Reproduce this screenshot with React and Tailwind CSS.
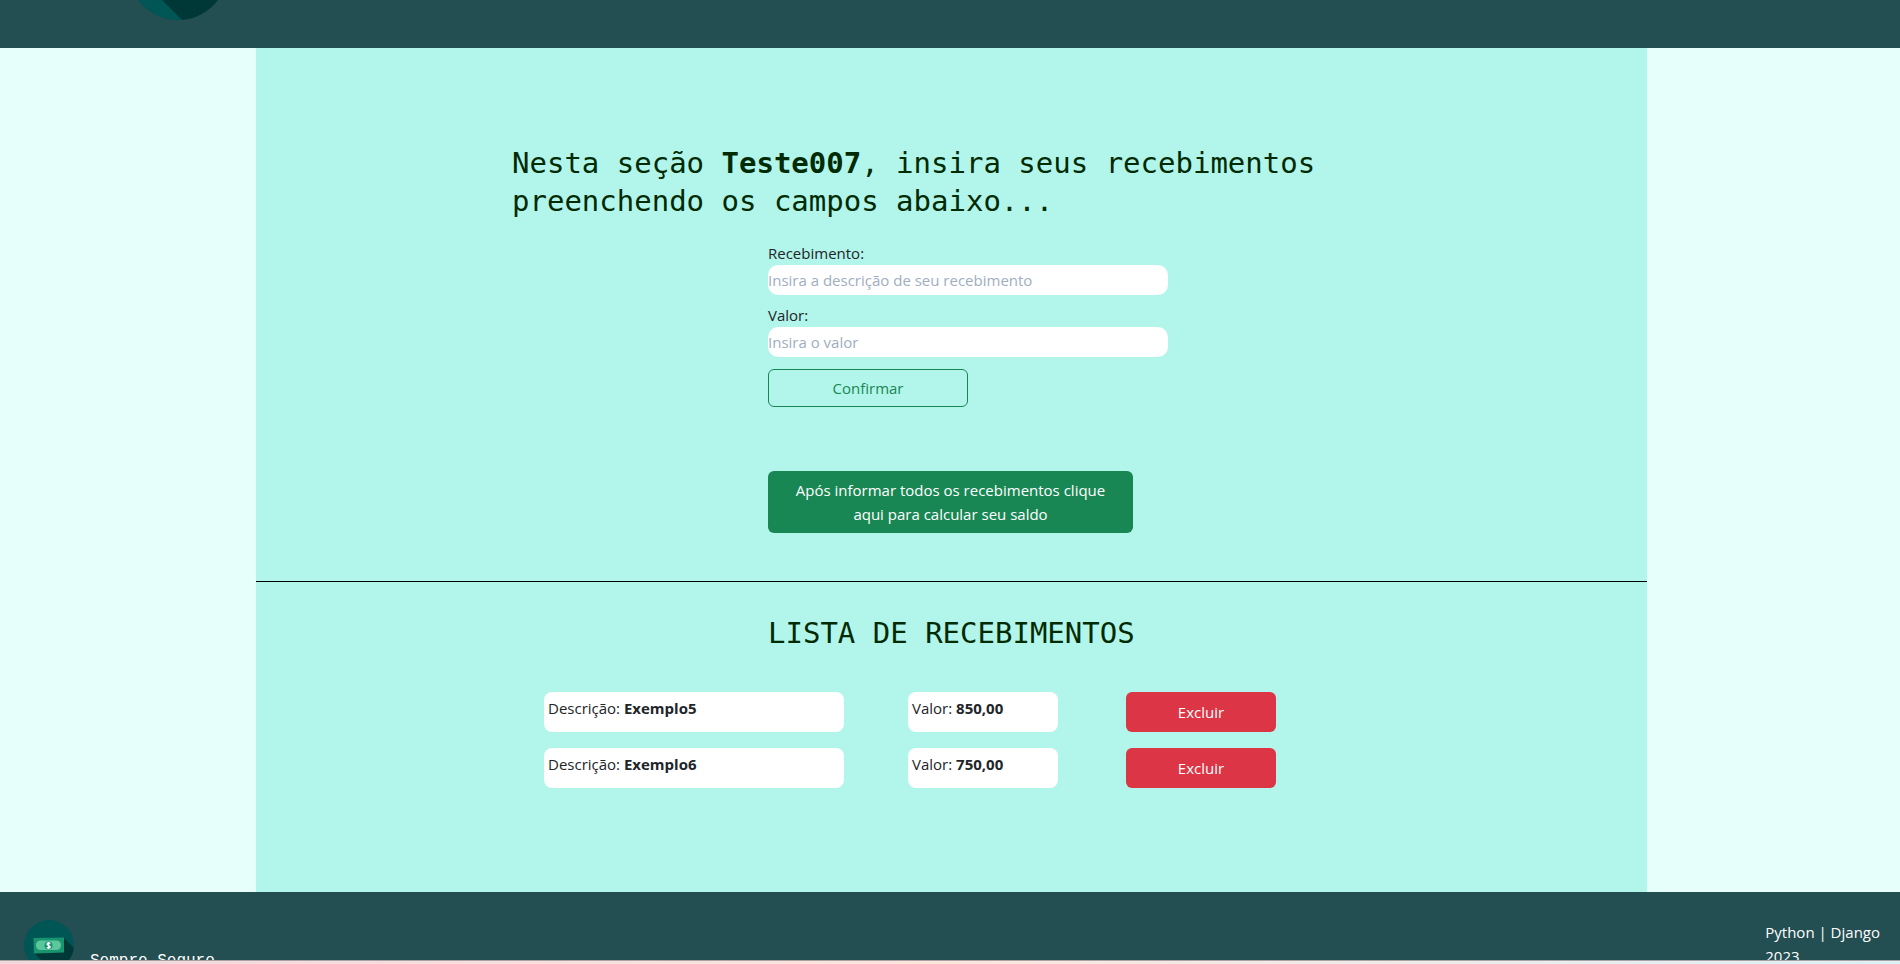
import React from "react";

const items = [
  { id: 5, name: "Exemplo5", value: "850,00" },
  { id: 6, name: "Exemplo6", value: "750,00" },
];

function Logo({ className }) {
  return (
    <svg viewBox="0 0 50 50" className={className} role="img" aria-label="Sempre Seguro">
      <clipPath id="disc">
        <circle cx="25" cy="25" r="25" />
      </clipPath>
      <circle cx="25" cy="25" r="25" fill="#005555" />
      <g clipPath="url(#disc)">
        <path d="M40 18L60 38V60H37L10 33Z" fill="#003838" />
      </g>
      <path d="M9.5 18L40 17.500V32.500L10 33.500Z" fill="#18946f" />
      <rect x="12" y="20.500" width="25" height="9.500" rx="4.500" fill="#5cc79c" />
      <circle cx="24.500" cy="25.500" r="4" fill="#18946f" />
      <path d="M26.200 23.600C25.500 22.600 23 22.700 23 24.200C23 25.800 26.200 25.200 26.200 26.900C26.200 28.400 23.600 28.500 22.800 27.400M24.600 22V29" fill="none" stroke="#fff" strokeWidth="1.300" />
    </svg>
  );
}

function Field({ id, label, placeholder }) {
  return (
    <div className="mb-2 flex flex-col">
      <label htmlFor={id} className="leading-6">{label}</label>
      <input
        id={id}
        type="text"
        placeholder={placeholder}
        className="h-[30px] w-full max-w-[400px] rounded-[10px] bg-white outline-none placeholder:text-[#a0aec0]"
      />
    </div>
  );
}

export default function App() {
  return (
    <div className="flex h-screen flex-col overflow-hidden bg-[#e6fffb] font-['Open_Sans',sans-serif] text-[15px] leading-6 text-[#212529]">
      <header className="flex h-12 shrink-0 items-end overflow-hidden bg-[#234e52] pb-7 pl-32">
        <Logo className="size-[100px] shrink-0" />
      </header>

      <main className="ml-64 mr-[253px] flex-1 bg-[#b2f5ea]">
        <section className="border-b border-black pb-12 pt-24">
          <h1 className="mx-64 font-['DejaVu_Sans_Mono',monospace] text-[29px] leading-[38px] text-[#002b05]">
            Nesta seção <strong>Teste007</strong>, insira seus recebimentos preenchendo os campos abaixo...
          </h1>
          <div className="ml-[512px] mt-[21px] w-[400px]">
            <form className="flex flex-col">
              <Field id="recebimento" label="Recebimento:" placeholder="Insira a descrição de seu recebimento" />
              <Field id="valor" label="Valor:" placeholder="Insira o valor" />
              <button type="button" className="mt-1 h-[38px] w-[200px] rounded-md border border-[#198754] text-[#198754]">
                Confirmar
              </button>
            </form>
            <button type="button" className="mt-16 block w-[365px] rounded-md bg-[#198754] px-4 py-[7px] text-white">
              Após informar todos os recebimentos clique aqui para calcular seu saldo
            </button>
          </div>
        </section>

        <section className="pt-8">
          <h2 className="ml-[512px] font-['DejaVu_Sans_Mono',monospace] text-[29px] leading-[38px] text-[#002b05]">
            LISTA DE RECEBIMENTOS
          </h2>
          <ul className="ml-72 mt-10 flex flex-col gap-4">
            {items.map((item) => (
              <li key={item.id} className="flex">
                <p className="h-10 w-[300px] rounded-lg bg-white px-1 pt-1">
                  Descrição: <strong>{item.name}</strong>
                </p>
                <p className="ml-16 h-10 w-[150px] rounded-lg bg-white px-1 pt-1">
                  Valor: <strong>{item.value}</strong>
                </p>
                <button type="button" className="ml-[68px] h-10 w-[150px] rounded-md bg-[#dc3545] text-white">
                  Excluir
                </button>
              </li>
            ))}
          </ul>
        </section>
      </main>

      <footer className="flex h-[68px] shrink-0 justify-between overflow-hidden bg-[#234e52] pl-6 pr-5 text-white">
        <div className="flex gap-4 pt-7">
          <Logo className="size-[50px] shrink-0" />
          <p className="mt-7 pt-px font-['Liberation_Mono',monospace] text-base">Sempre Seguro</p>
        </div>
        <p className="pt-7">
          Python | Django
          <br />
          2023
        </p>
      </footer>
      <div className="h-1 shrink-0 border-t border-[#a9a3a5] bg-linear-to-r from-[#f0d8dc] via-[#fbe6dc] to-[#dcf0f6]" />
    </div>
  );
}
